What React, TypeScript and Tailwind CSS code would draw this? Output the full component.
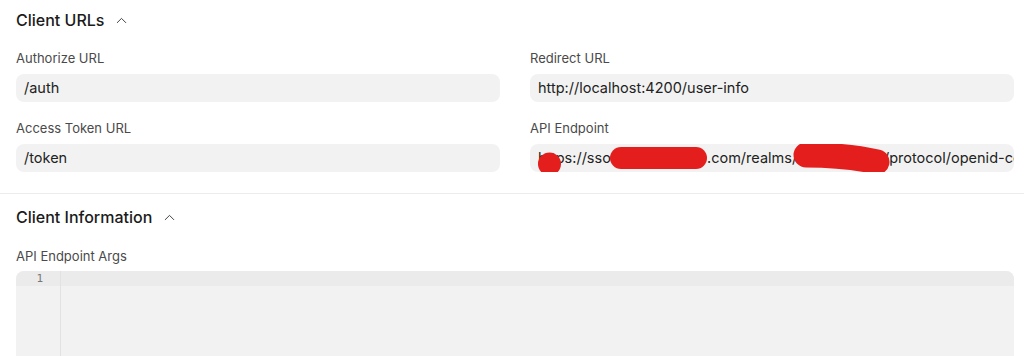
import React from "react";
import { ChevronUp } from "lucide-react";

const Field = ({ label, children }: { label: string; children: React.ReactNode }) => (
  <div className="flex flex-col">
    <div className="h-[17px] text-[13px] leading-[17px] text-[#4a4a4a]">{label}</div>
    <div className="relative mt-[7px] h-[28px] overflow-hidden rounded-[8px] bg-[#f2f2f2] px-2 text-[14.5px] leading-[28px] text-[#222] whitespace-nowrap">
      {children}
    </div>
  </div>
);

const SectionTitle = ({ title }: { title: string }) => (
  <div className="flex h-6 items-center gap-[9px]">
    <span className="text-[16px] font-medium text-[#1b1b1b]">{title}</span>
    <ChevronUp size={17} strokeWidth={1.3} className="text-[#333]" />
  </div>
);

export default function App() {
  return (
    <div className="h-[356px] w-[1024px] overflow-hidden bg-white font-['Inter',sans-serif]">
      <section className="border-b border-[#ececec] pl-4 pr-[10px] pt-2 pb-[21px]">
        <SectionTitle title="Client URLs" />
        <div className="mt-[18px] grid grid-cols-2 gap-x-[30px] gap-y-[18px]">
          <Field label="Authorize URL">/auth</Field>
          <Field label="Redirect URL">http://localhost:4200/user-info</Field>
          <Field label="Access Token URL">/token</Field>
          <Field label="API Endpoint">
            <span className="inline-block w-[74px] align-top">https://sso</span>
            <span className="inline-block w-[95px] align-top" />
            <span className="inline-block w-[86px] align-top">.com/realms/</span>
            <span className="inline-block w-[91px] align-top" />
            <span className="align-top">/protocol/openid-connect/userinfo</span>
            {/* redaction marks */}
            <svg className="absolute left-0 top-[-4px] h-[36px] w-[484px]" viewBox="0 0 484 36">
              <circle cx="19.5" cy="24" r="11.5" fill="#e41d1d" />
              <rect x="80" y="7" width="97" height="22" rx="11" fill="#e41d1d" />
              <path d="M276 15 C300 15, 325 17, 347 22" stroke="#e41d1d" strokeWidth="25" strokeLinecap="round" fill="none" />
            </svg>
          </Field>
        </div>
      </section>
      <section className="pl-4 pr-[10px] pt-[11px]">
        <SectionTitle title="Client Information" />
        <div className="mt-[19px] h-[16px] text-[13px] leading-[16px] text-[#4a4a4a]">API Endpoint Args</div>
        <div className="mt-[7px] flex h-[100px] overflow-hidden rounded-t-[8px] bg-[#f2f2f2] font-['DejaVu_Sans_Mono',monospace] text-[11px]">
          <div className="w-[45px] border-r border-[#e2e2e2]">
            <div className="h-[15px] bg-[#ebebeb] pr-[17px] text-right leading-[15px] text-[#777]">1</div>
          </div>
          <div className="flex-1">
            <div className="h-[15px] bg-[#ebebeb]" />
          </div>
        </div>
      </section>
    </div>
  );
}
